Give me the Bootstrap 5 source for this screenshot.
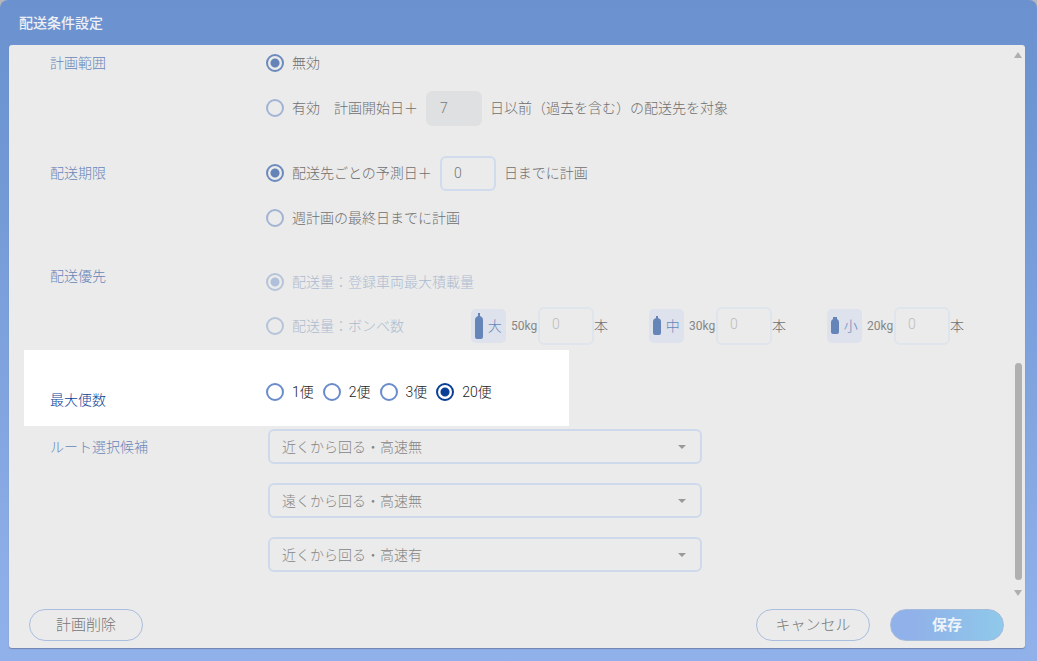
<!DOCTYPE html>
<html lang="ja">
<head>
<meta charset="utf-8">
<meta name="viewport" content="width=device-width, initial-scale=1">
<title>配送条件設定</title>
<link href="https://cdn.jsdelivr.net/npm/bootstrap@5.3.0/dist/css/bootstrap.min.css" rel="stylesheet">
<style>
  html { background: #b4b6ba; }
  body { font-family: Roboto, "Noto Sans CJK JP", sans-serif; font-size: 14px; line-height: 20px; font-weight: 300; color: #6f6f6f; background: none; }
  .dialog { min-height: 100vh; padding: 0 12px 13px 9px; border-radius: 8px 8px 0 0; background: linear-gradient(#6b92cf 0, #6d95d1 15%, #8aabe5 80%, #90b1e9 100%); }
  .dialog-title { height: 45px; padding: 0 10px; font-size: 14px; line-height: 20px; font-weight: 500; color: #edf0f5; }
  .panel { background: #ebebeb; border-radius: 3px; box-shadow: 0 1px 1px #7186ad; }
  .setting { display: grid; grid-template-columns: 216px 1fr; align-items: start; padding-left: 41px; }
  .setting-name { color: #6787ba; line-height: 36px; }
  .choices { display: grid; gap: 9px; }
  .choice { display: flex; align-items: center; min-height: 36px; white-space: nowrap; }
  .limit { margin-top: 29px; }
  .priority { margin-top: 22px; }
  .priority .choices { gap: 7px; padding-top: 6px; }
  .count-name { width: 179px; }
  .form-check-input[type=radio] { flex: none; width: 18px; height: 18px; margin: 0 8px 0 0; border: 2px solid #a2b4d5; background: none; }
  .form-check-input[type=radio]:checked { border-color: #6c8bbd; background: radial-gradient(circle, #6484b8 4px, transparent 5px); }
  .form-check-input[type=radio]:disabled { border-color: #b6c4da; opacity: 1; }
  .form-check-input[type=radio]:checked:disabled { background: radial-gradient(circle, #b0c0da 4px, transparent 5px); }
  .form-check-input[type=radio]:disabled ~ label { opacity: 1; color: #acbbcf; }
  .num { width: 56px; height: 35px; padding: 0 12px; font-size: 14px; font-weight: 300; color: #777; border: 2px solid #d0dcee; border-radius: 6px; background: none; }
  .num:disabled { background: #dfe0e1; border-color: #dfe0e1; }
  .cylinders { display: grid; grid-template-columns: repeat(3, 178px); }
  .cylinders .num { height: 38px; padding-bottom: 4px; }
  .cylinders .num:disabled { background: none; border-color: #dfe5ec; color: #bcbcbc; }
  .cylinder-tag { width: 35px; height: 34px; margin-right: 5px; border-radius: 5px; background: #dde2ec; color: #6787ba; }
  .cylinder-tag svg { width: 8px; height: 28px; fill: #6585b8; }
  .weight { width: 27px; font-size: 12px; font-weight: 400; color: #868686; }
  .highlighted { width: 545px; height: 76px; margin: 5px 0 3px 15px; padding: 24px 0 0 26px; background: #fff; color: #222; }
  .highlighted .setting-name { color: #0b3f96; padding-top: 8px; }
  .trips { display: flex; gap: 9px; }
  .highlighted .form-check-input[type=radio] { border-color: #6a8ccb; }
  .highlighted .form-check-input[type=radio]:checked { border-color: #0b3f96; background: radial-gradient(circle, #0b3f96 4px, transparent 5px); }
  .route-list { display: grid; gap: 19px; padding-left: 2px; }
  .route { width: 434px; height: 35px; padding: 0 34px 0 12px; font-size: 14px; font-weight: 300; line-height: 20px; color: #858585; border: 2px solid #cedaec; border-radius: 6px;
    background: url("data:image/svg+xml,%3Csvg xmlns='http://www.w3.org/2000/svg' viewBox='0 0 8 4'%3E%3Cpath d='M0 0h8L4 4z' fill='%23999'/%3E%3C/svg%3E") no-repeat right 14px center / 8px 4px; }
  .scroll-rail { width: 14px; padding: 7px 0 6px; }
  .scroll-rail svg { width: 8px; height: 6px; fill: #afafaf; flex: none; }
  .rail-above { flex: 304; }
  .rail-thumb { flex: 216; width: 7px; border-radius: 4px; background: #b0b0b0; }
  .rail-below { flex: 10; }
  .panel-footer { padding: 7px 21px 7px 20px; }
  .pill { width: 114px; height: 32px; padding: 0; font-size: 15px; line-height: 20px; font-weight: 300; color: #777; border: 1px solid #aabedf; border-radius: 16px; }
  .pill-save { margin-left: 20px; color: #edf3f8; font-weight: 700; border-color: #a4bbdb; background: linear-gradient(90deg, #90b1e9 20%, #8fc9ea); }
</style>
</head>
<body>
<main class="dialog d-flex flex-column">
  <h1 class="dialog-title d-flex align-items-center m-0">配送条件設定</h1>
  <form class="panel d-flex flex-column flex-grow-1">
    <div class="d-flex flex-grow-1">
      <div class="flex-grow-1">
        <section class="setting">
          <div class="setting-name">計画範囲</div>
          <div class="choices">
            <div class="choice"><input class="form-check-input" type="radio" name="range" id="range-off" checked><label for="range-off">無効</label></div>
            <div class="choice"><input class="form-check-input" type="radio" name="range" id="range-on"><label for="range-on">有効　計画開始日＋</label>
              <input class="num form-control mx-2" type="text" value="7" aria-label="日数" disabled><span>日以前（過去を含む）の配送先を対象</span></div>
          </div>
        </section>
        <section class="setting limit">
          <div class="setting-name">配送期限</div>
          <div class="choices">
            <div class="choice"><input class="form-check-input" type="radio" name="limit" id="limit-days" checked><label for="limit-days">配送先ごとの予測日＋</label>
              <input class="num form-control mx-2" type="text" value="0" aria-label="予測日からの日数"><span>日までに計画</span></div>
            <div class="choice"><input class="form-check-input" type="radio" name="limit" id="limit-week"><label for="limit-week">週計画の最終日までに計画</label></div>
          </div>
        </section>
        <section class="setting priority">
          <div class="setting-name">配送優先</div>
          <div class="choices">
            <div class="choice"><input class="form-check-input" type="radio" name="priority" id="by-load" checked disabled><label for="by-load">配送量：登録車両最大積載量</label></div>
            <div class="choice"><input class="form-check-input" type="radio" name="priority" id="by-count" disabled><label class="count-name" for="by-count">配送量：ボンベ数</label>
              <div class="cylinders">
                <div class="d-flex align-items-center">
                  <span class="cylinder-tag d-flex align-items-center justify-content-evenly"><svg viewBox="0 0 8 28"><path d="M3 1h2v3q3 1 3 4v17q0 2-2 2H2q-2 0-2-2V8q0-3 3-4z"/></svg>大</span>
                  <label class="weight" for="large">50kg</label><input class="num form-control" id="large" type="text" value="0" disabled><span>本</span>
                </div>
                <div class="d-flex align-items-center">
                  <span class="cylinder-tag d-flex align-items-center justify-content-evenly"><svg viewBox="0 0 8 28"><path d="M3 4h2v2q3 1 3 3v12q0 2-2 2H2q-2 0-2-2V9q0-2 3-3z"/></svg>中</span>
                  <label class="weight" for="medium">30kg</label><input class="num form-control" id="medium" type="text" value="0" disabled><span>本</span>
                </div>
                <div class="d-flex align-items-center">
                  <span class="cylinder-tag d-flex align-items-center justify-content-evenly"><svg viewBox="0 0 8 28"><path d="M2 5h4v2q2 1 2 3v10q0 2-2 2H2q-2 0-2-2V10q0-2 2-3z"/></svg>小</span>
                  <label class="weight" for="compact">20kg</label><input class="num form-control" id="compact" type="text" value="0" disabled><span>本</span>
                </div>
              </div>
            </div>
          </div>
        </section>
        <section class="setting highlighted">
          <div class="setting-name">最大便数</div>
          <div class="trips">
            <div class="choice"><input class="form-check-input" type="radio" name="trips" id="trips1"><label for="trips1">1便</label></div>
            <div class="choice"><input class="form-check-input" type="radio" name="trips" id="trips2"><label for="trips2">2便</label></div>
            <div class="choice"><input class="form-check-input" type="radio" name="trips" id="trips3"><label for="trips3">3便</label></div>
            <div class="choice"><input class="form-check-input" type="radio" name="trips" id="trips20" checked><label for="trips20">20便</label></div>
          </div>
        </section>
        <section class="setting">
          <label class="setting-name" for="route1">ルート選択候補</label>
          <div class="route-list">
            <select class="form-select route" id="route1"><option>近くから回る・高速無</option></select>
            <select class="form-select route" aria-label="ルート選択候補 2"><option>遠くから回る・高速無</option></select>
            <select class="form-select route" aria-label="ルート選択候補 3"><option>近くから回る・高速有</option></select>
          </div>
        </section>
      </div>
      <div class="scroll-rail d-flex flex-column align-items-center" aria-hidden="true">
        <svg viewBox="0 0 8 6"><path d="M4 0l4 6H0z"/></svg>
        <div class="rail-above"></div><div class="rail-thumb"></div><div class="rail-below"></div>
        <svg viewBox="0 0 8 6"><path d="M0 0h8L4 6z"/></svg>
      </div>
    </div>
    <div class="panel-footer d-flex align-items-center">
      <button class="btn pill me-auto" type="button">計画削除</button>
      <button class="btn pill" type="button">キャンセル</button>
      <button class="btn pill pill-save" type="submit">保存</button>
    </div>
  </form>
</main>
<script src="https://cdn.jsdelivr.net/npm/bootstrap@5.3.0/dist/js/bootstrap.bundle.min.js"></script>
</body>
</html>
